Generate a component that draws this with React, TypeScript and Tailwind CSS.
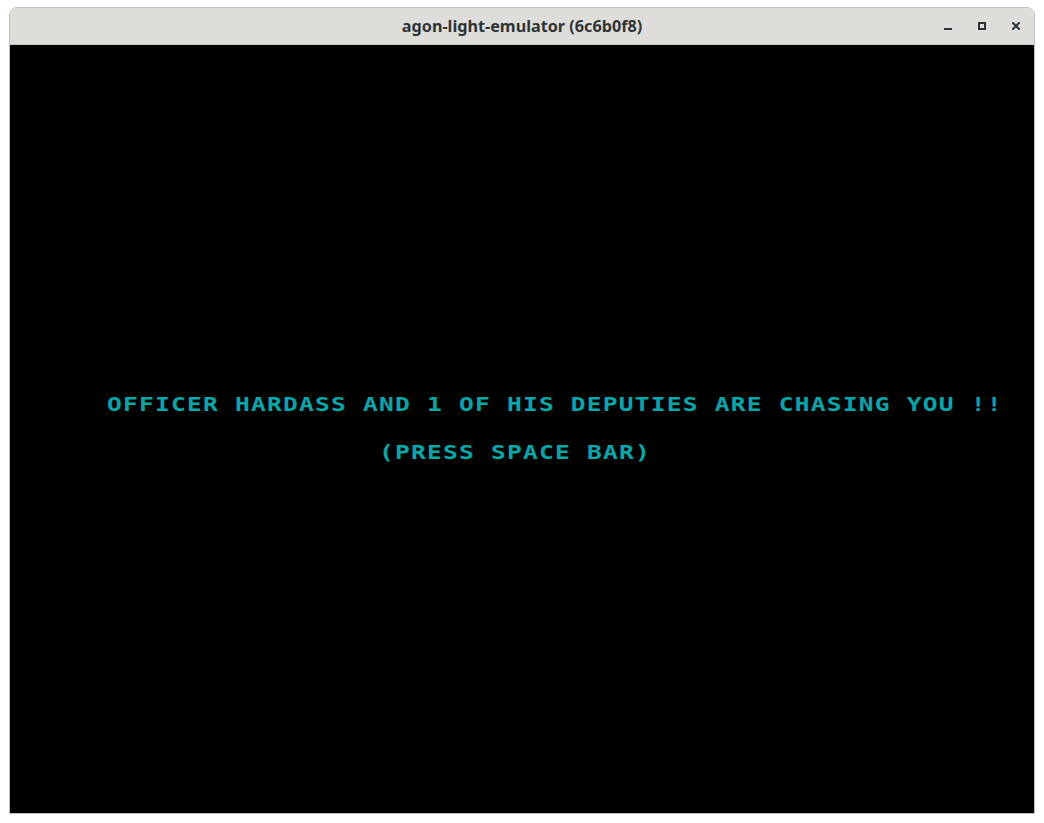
import React from "react";

const pixelFont = { fontFamily: '"DejaVu Sans Mono", "Liberation Mono", monospace' };

export default function App() {
  return (
    <div className="w-[1044px] h-[823px] bg-white pt-[7px] pl-[9px]">
      <div className="w-[1026px] flex flex-col rounded-t-[8px] border border-[#c0bfbc] overflow-hidden">
        <div className="relative h-[37px] bg-[#deddda] border-b border-[#c9c8c5] flex items-center justify-center">
          <span
            className="text-[16.2px] font-bold text-[#2e3436] leading-none"
            style={{ fontFamily: '"Noto Sans", "Open Sans", sans-serif' }}
          >
            agon-light-emulator (6c6b0f8)
          </span>
          <div className="absolute right-[14px] top-0 h-full flex items-center gap-[26px]">
            <svg width="8" height="8" viewBox="0 0 8 8" className="mt-[2px]">
              <rect x="0" y="5" width="8" height="2" fill="#2e3436" />
            </svg>
            <svg width="8" height="8" viewBox="0 0 8 8">
              <rect x="1" y="1" width="6" height="6" fill="none" stroke="#2e3436" strokeWidth="2" />
            </svg>
            <svg width="8" height="8" viewBox="0 0 8 8">
              <path d="M1 1 L7 7 M7 1 L1 7" stroke="#2e3436" strokeWidth="2" strokeLinecap="square" />
            </svg>
          </div>
        </div>
        <div className="h-[768px] bg-black pt-[352px] text-[#00aaaa]">
          <div
            className="ml-[97px] text-[19.6px] leading-[16px] font-bold tracking-[1.0px] whitespace-pre scale-x-125 origin-left"
            style={pixelFont}
          >
            OFFICER HARDASS AND 1 OF HIS DEPUTIES ARE CHASING YOU !!
          </div>
          <div
            className="ml-[369px] mt-[32px] text-[19.6px] leading-[16px] font-bold tracking-[1.0px] whitespace-pre scale-x-125 origin-left"
            style={pixelFont}
          >
            (PRESS SPACE BAR)
          </div>
        </div>
      </div>
    </div>
  );
}
